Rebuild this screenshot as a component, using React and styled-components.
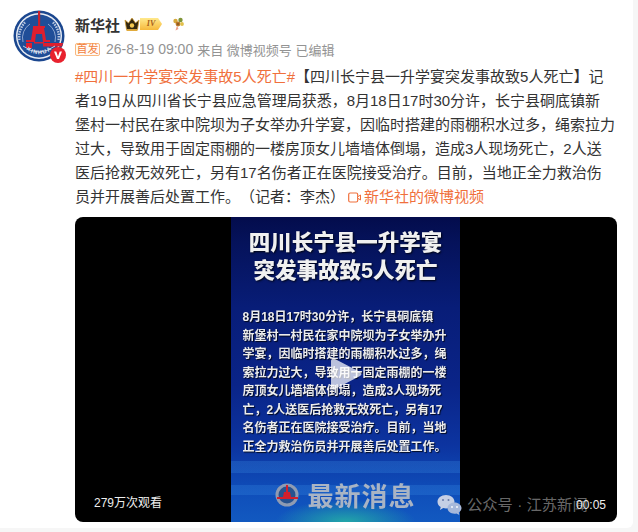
import React from 'react';
import styled, { createGlobalStyle } from 'styled-components';

const Global = createGlobalStyle`
  html, body { margin: 0; padding: 0; background: #f6f6f6; }
  body { font-family: "Liberation Sans", "Noto Sans CJK SC", sans-serif; text-spacing-trim: space-all; }
  * { box-sizing: border-box; }
`;
const Card = styled.div`
  width: 633px; height: 528px; background: #fff; border-radius: 0 0 6px 0;
  padding: 10px 16px 0 13px; overflow: hidden;
`;
const Header = styled.header`display: flex; gap: 10px; height: 52px;`;
const AvatarWrap = styled.div`position: relative; width: 52px; height: 52px; flex: none;`;
const Badge = styled.div`position: absolute; right: -1px; bottom: -1px; width: 16px; height: 16px; line-height: 0;`;
const Meta = styled.div`display: flex; flex-direction: column; padding-top: 3px;`;
const NameRow = styled.div`display: flex; align-items: center; height: 22px;`;
const Name = styled.span`font-size: 15px; font-weight: 700; color: #333; margin-right: 4px;`;
const Level = styled.span`
  width: 22px; height: 12px; background: linear-gradient(#ffe98c, #f6b93c);
  clip-path: polygon(0 0, 82% 0, 100% 50%, 82% 100%, 0 100%);
  color: #a8611a; font: italic 700 8px/12px "Liberation Serif", serif; text-align: center;
`;
const SubRow = styled.div`display: flex; align-items: center; margin-top: 6px; height: 16px; font-size: 13px; color: #939393; white-space: nowrap;`;
const First = styled.span`
  border: 1px solid #f9b77f; border-radius: 2px; color: #f2803e; font-size: 11px; line-height: 11px;
  height: 13px; width: 25px; text-align: center; margin-right: 6px; background: #fffaf5;
`;
const DateText = styled.span`font-size: 14px; margin-right: 4px;`;
const Body = styled.div`
  margin: 3px 0 0 62px; width: 541px; font-size: 15px; line-height: 24px; color: #333;
`;
const Tag = styled.span`color: #f0703c;`;
const VideoLink = styled.span`color: #f0703c; margin-left: 3px;`;
const Video = styled.div`
  position: relative; margin: 8px 0 0 62px; width: 542px; height: 305px; background: #000;
  border-radius: 8px; overflow: hidden; display: flex; justify-content: center;
`;
const Poster = styled.div`
  width: 229px; height: 100%; margin-right: 1px; display: flex; flex-direction: column; align-items: center;
  color: #fff; background:
    radial-gradient(ellipse 70px 22px at 50% 100%, #22a6a8 0, transparent 100%),
    linear-gradient(180deg, transparent 0 80%, rgba(70,160,240,.22) 80% 84%, transparent 84% 88%, rgba(70,160,240,.2) 88% 91%, transparent 91%),
    linear-gradient(180deg, #030c4c 0, #05125a 8%, #081d78 30%, #0a2488 55%, #0c34a0 75%, #0f4eba 90%, #1259c0 100%);
`;
const Title = styled.div`
  margin-top: 12px; font-size: 21.5px; line-height: 28px; font-weight: 900; text-align: center;
  text-shadow: 1px 1px 2px rgba(0,0,0,.8); color: #f0f0f0; white-space: nowrap; filter: blur(.3px);
`;
const Para = styled.div`
  margin-top: 23px; width: 206px; font-size: 12px; line-height: 18.5px; font-weight: 700; color: #ececec;
  text-shadow: 1px 1px 1px rgba(0,0,0,.8); white-space: nowrap; filter: blur(.3px);
`;
const Foot = styled.div`margin-top: auto; margin-bottom: 12px; display: flex; align-items: center; gap: 8px;`;
const Latest = styled.span`
  font: 700 26px/30px "Noto Sans CJK SC", serif; color: #a9b4c4; letter-spacing: 1px; filter: blur(.3px);
`;
const Play = styled.svg`position: absolute; left: 254px; top: 140px;`;
const Views = styled.span`position: absolute; left: 19px; bottom: 12px; font-size: 12px; line-height: 14px; color: #eee;`;
const Time = styled.span`position: absolute; right: 11px; bottom: 10px; font-size: 12px; line-height: 14px; color: #eee;`;
const Mark = styled.div`
  position: absolute; left: 362px; top: 277px; display: flex; align-items: center; gap: 5px;
  font-size: 15.3px; line-height: 22px; color: rgba(255,255,255,.42); white-space: nowrap;
`;
const MarkIcon = styled.svg`flex: none;`;

const Avatar = () => (
  <svg width="52" height="52" viewBox="0 0 52 52">
    <defs><path id="xh" d="M9 33a18.500 18.500 0 0 0 34 0" /></defs>
    <circle cx="26" cy="26" r="25.500" fill="#1b478f" />
    <circle cx="26" cy="26" r="23" fill="#e9edf4" />
    <circle cx="26" cy="26" r="21.500" fill="#1f4e98" />
    <path d="M6.500 30a20 20 0 0 1 6-18M45.500 30a20 20 0 0 0-6-18" fill="none" stroke="#b9c8e0" strokeWidth="2.500" strokeDasharray="1.500 1" />
    <path d="M10 32a16.500 16.500 0 0 1 7-18M42 32a16.500 16.500 0 0 0-7-18" fill="none" stroke="#8fa7cf" strokeWidth="1" />
    <path d="M25 1h2.200v15H25z" fill="#c9202c" />
    <path d="M20 16h12v2h-1l2 12h4v2h-7l-1-8h-6l-1 8H13v-2h5l2-12z" fill="#de1f2e" />
    <path d="M21 20h10v2H21z" fill="#de1f2e" />
    <path d="M13 33h6v5h-6zM21 32h10v1.500H21zM30 33h20l-1 3.500H30z" fill="#de1f2e" />
    <path d="M10 36q16 12 32 0" fill="none" stroke="#e9edf4" strokeWidth=".8" />
    <text fontSize="5.500" fontWeight="700" fill="#e9edf4" letterSpacing="1.200"><textPath href="#xh" startOffset="18%">XINHUA</textPath></text>
  </svg>
);
const Crown = () => (
  <svg width="16" height="14" viewBox="0 0 16 14">
    <path d="M1 3l3.500 3L8 1l3.500 5L15 3l-1.500 9.500h-11z" fill="#33270f" stroke="#d09a30" strokeWidth=".8" />
    <path d="M2.500 12.500h11V14h-11z" fill="#e1ab3c" />
    <circle cx="8" cy="8.500" r="2.200" fill="#f5c952" />
  </svg>
);
const Flower = () => (
  <svg width="13" height="14" viewBox="0 0 13 14" style={{ marginLeft: 10 }}>
    <path d="M5 8.500l-1.500 5 3-1.500z" fill="#f0a088" />
    <circle cx="3.500" cy="4" r="2.200" fill="#d8a83a" />
    <circle cx="8.500" cy="3" r="2.200" fill="#7f9438" />
    <circle cx="6" cy="7" r="2.400" fill="#b9772a" />
    <circle cx="10" cy="7" r="1.900" fill="#e1c04a" />
    <circle cx="6" cy="7" r=".8" fill="#5d3c18" />
  </svg>
);
const LinkIcon = () => (
  <svg width="13" height="11" viewBox="0 0 13 11" style={{ margin: '0 3px -1px 0' }}>
    <rect x=".7" y="1" width="9" height="9" rx="1.500" fill="none" stroke="#f0703c" strokeWidth="1.200" />
    <path d="M9.500 5l3-2v5l-3-2z" fill="#fff" stroke="#f0703c" />
  </svg>
);
const Emblem = () => (
  <svg width="24" height="24" viewBox="0 0 24 24" style={{ flex: 'none' }}>
    <circle cx="12" cy="12" r="11.500" fill="#8f9bb2" />
    <circle cx="12" cy="12" r="8.500" fill="#27528f" />
    <path d="M11 2h2v7h-2zM9 9h6l1 5h7v2H2v-2h6z" fill="#d31f2c" />
  </svg>
);
const WeChat = () => (
  <MarkIcon width="25" height="22" viewBox="0 0 25 22">
    <path d="M9 1c5 0 8.500 3 8.500 6.800S13.700 14.500 9 14.500c-1 0-2-.1-2.800-.4L3 16l.7-3C1.500 11.700.5 10 .5 7.800.5 4 4 1 9 1z" fill="#c5cfe5" />
    <path d="M17.500 8.500c4 0 7 2.500 7 5.600 0 1.800-1 3.300-2.700 4.400l.5 2.500-2.800-1.500c-.6.100-1.300.2-2 .2-4 0-7-2.500-7-5.600s3-5.600 7-5.600z" fill="#a7b8da" />
    <circle cx="6" cy="6" r="1" fill="#6a7ca8" /><circle cx="11.500" cy="6" r="1" fill="#6a7ca8" />
    <circle cx="15" cy="13" r=".9" fill="#fff" /><circle cx="20" cy="13" r=".9" fill="#fff" />
  </MarkIcon>
);

export default function App() {
  return (
    <>
      <Global />
      <Card>
        <Header>
          <AvatarWrap>
            <Avatar />
            <Badge>
              <svg width="16" height="16" viewBox="0 0 16 16">
                <circle cx="8" cy="8" r="8" fill="#e8222e" />
                <path d="M4 4.500h2.300L8 9.500l1.700-5H12L9 12H7z" fill="#fff" />
              </svg>
            </Badge>
          </AvatarWrap>
          <Meta>
            <NameRow>
              <Name>新华社</Name>
              <Crown />
              <Level>IV</Level>
              <Flower />
            </NameRow>
            <SubRow>
              <First>首发</First>
              <DateText>26-8-19 09:00</DateText>
              <span>来自 微博视频号 已编辑</span>
            </SubRow>
          </Meta>
        </Header>
        <Body>
          <Tag>#四川一升学宴突发事故5人死亡#</Tag>【四川长宁县一升学宴突发事故致5人死亡】记者19日从四川省长宁县应急管理局获悉，8月18日17时30分许，长宁县硐底镇新<br />堡村一村民在家中院坝为子女举办升学宴，因临时搭建的雨棚积水过多，绳索拉力过大，导致用于固定雨棚的一楼房顶女儿墙墙体倒塌，造成3人现场死亡，2人送医后抢救无效死亡，另有17名伤者正在医院接受治疗。目前，当地正全力救治伤员并开展善后处置工作。（记者：李杰）
          <VideoLink><LinkIcon />新华社的微博视频</VideoLink>
        </Body>
        <Video>
          <Poster>
            <Title>四川长宁县一升学宴<br />突发事故致5人死亡</Title>
            <Para>
              8月18日17时30分许，长宁县硐底镇<br />
              新堡村一村民在家中院坝为子女举办升<br />
              学宴，因临时搭建的雨棚积水过多，绳<br />
              索拉力过大，导致用于固定雨棚的一楼<br />
              房顶女儿墙墙体倒塌，造成3人现场死<br />
              亡，2人送医后抢救无效死亡，另有17<br />
              名伤者正在医院接受治疗。目前，当地<br />
              正全力救治伤员并开展善后处置工作。
            </Para>
            <Foot><Emblem /><Latest>最新消息</Latest></Foot>
          </Poster>
          <Play width="34" height="34" viewBox="0 0 34 34">
            <path d="M2 4c0-2 2-3 4-2l25 13c2 1 2 3 0 4L6 32c-2 1-4 0-4-2z" fill="rgba(255,255,255,.72)" />
          </Play>
          <Views>279万次观看</Views>
          <Mark><WeChat /><span>公众号 · 江苏新闻</span></Mark>
          <Time>00:05</Time>
        </Video>
      </Card>
    </>
  );
}
